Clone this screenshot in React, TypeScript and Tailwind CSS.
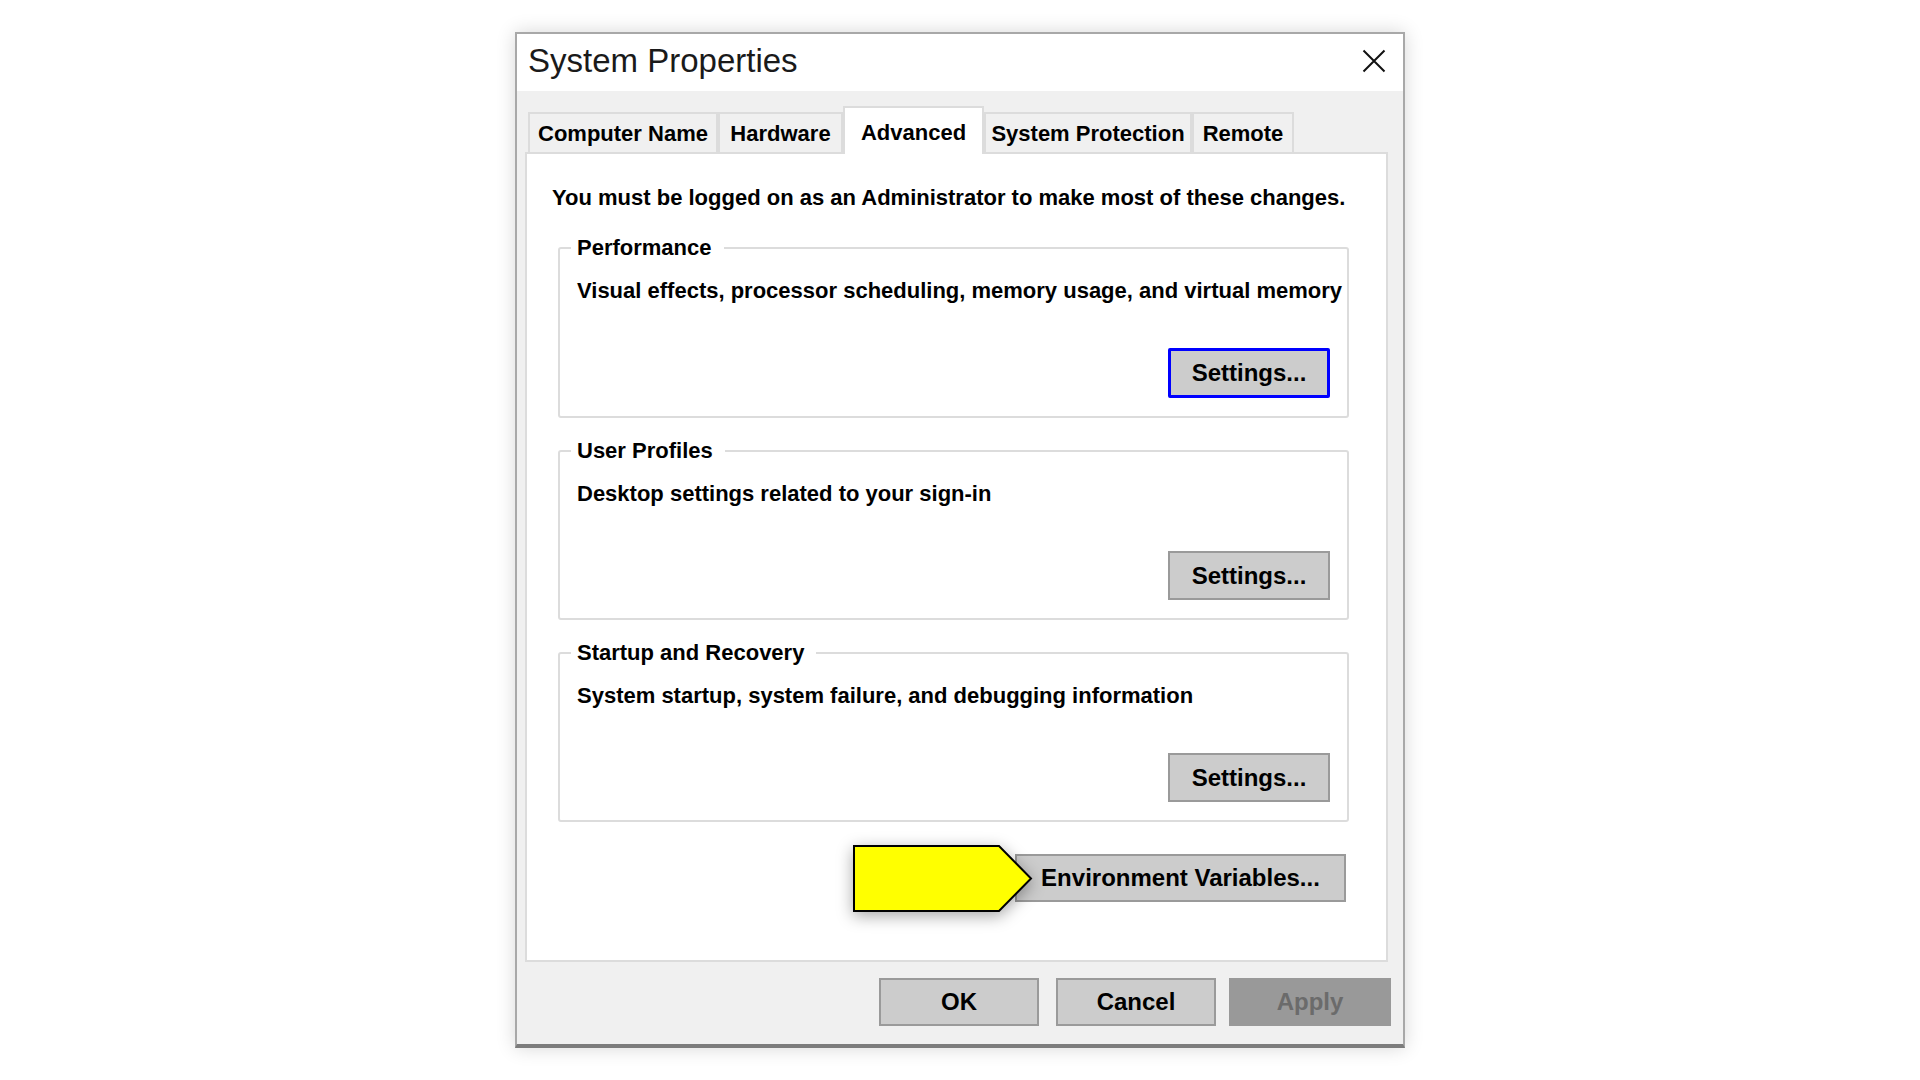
import type { ReactNode } from 'react';

const tabs = [
  { label: 'Computer Name', w: 'w-[190px]' },
  { label: 'Hardware', w: 'w-[125px]' },
  { label: 'Advanced', w: 'w-[141px]', active: true },
  { label: 'System Protection', w: 'w-[208px]' },
  { label: 'Remote', w: 'w-[102px]' },
];

function SettingsButton({ focused }: { focused?: boolean }) {
  return (
    <button
      className={
        focused
          ? 'w-[162px] h-[50px] bg-[#cccccc] border-[3px] border-[#0000ff] rounded-[2px] text-[24px] font-bold text-black'
          : 'w-[162px] h-[49px] bg-[#cccccc] border-2 border-[#9a9a9a] text-[24px] font-bold text-black'
      }
    >
      Settings...
    </button>
  );
}

function Group({ title, desc, focused, first }: { title: string; desc: string; focused?: boolean; first?: boolean }) {
  return (
    <fieldset
      className={
        (first ? 'mt-[24px] ' : 'mt-[20px] ') +
        'min-w-0 border-2 border-[#dcdcdc] rounded-[3px] pl-[17px] pr-[17px] pb-[18px]'
      }
    >
      <legend className="-ml-[6px] pl-[6px] pr-[12px] text-[22px] leading-[26px] font-bold">{title}</legend>
      <p className="mt-[17px] text-[22px] leading-[26px] font-bold whitespace-nowrap">{desc}</p>
      <div className="mt-[44px] flex justify-end">
        <SettingsButton focused={focused} />
      </div>
    </fieldset>
  );
}

function FooterButton({ children, disabled }: { children: ReactNode; disabled?: boolean }) {
  return (
    <button
      className={
        disabled
          ? 'w-[162px] h-[48px] bg-[#999999] text-[#6b6b6b] text-[24px] font-bold'
          : 'w-[160px] h-[48px] bg-[#cccccc] border-2 border-[#9a9a9a] text-[24px] font-bold text-black'
      }
    >
      {children}
    </button>
  );
}

export default function App() {
  return (
    <div className="min-h-screen bg-white pt-[32px] font-['Liberation_Sans',Arial,sans-serif] text-black">
      <div className="mx-auto w-[890px] h-[1016px] flex flex-col bg-[#f0f0f0] border-2 border-[#a8a8a8] border-b-4 border-b-[#7c7c7c] shadow-[0_0_18px_rgba(0,0,0,0.16)]">
        {/* title bar */}
        <div className="h-[57px] shrink-0 bg-white flex items-center justify-between pl-[11px] pr-[17px]">
          <span className="text-[33px] leading-none text-[#1a1a1a] pb-[4px]">System Properties</span>
          <svg width="24" height="24" viewBox="0 0 24 24" className="mb-[4px]">
            <path d="M1.5 1.5 L22.5 22.5 M22.5 1.5 L1.5 22.5" stroke="#111" strokeWidth="2" fill="none" />
          </svg>
        </div>

        <div className="pl-[8px] pr-[15px]">
          {/* tabs */}
          <div className="relative z-10 flex items-end pt-[15px] pl-[3px]">
            {tabs.map((t) =>
              t.active ? (
                <div
                  key={t.label}
                  className={t.w + ' h-[48px] -mb-[2px] bg-white border-2 border-b-0 border-[#dcdcdc] flex items-center justify-center pt-[3px] text-[22px] font-bold'}
                >
                  {t.label}
                </div>
              ) : (
                <div
                  key={t.label}
                  className={t.w + ' h-[40px] bg-[#f0f0f0] border-2 border-b-0 border-[#dcdcdc] flex items-center justify-center text-[22px] font-bold'}
                >
                  {t.label}
                </div>
              )
            )}
          </div>

          {/* panel */}
          <div className="h-[810px] bg-white border-2 border-[#dcdcdc] pl-[31px] pr-[37px] pt-[31px]">
            <p className="text-[22px] leading-[26px] font-bold -ml-[6px] whitespace-nowrap">
              You must be logged on as an Administrator to make most of these changes.
            </p>
            <Group
              first
              focused
              title="Performance"
              desc="Visual effects, processor scheduling, memory usage, and virtual memory"
            />
            <Group title="User Profiles" desc="Desktop settings related to your sign-in" />
            <Group title="Startup and Recovery" desc="System startup, system failure, and debugging information" />

            <div className="mt-[32px] flex justify-end pr-[3px]">
              <div className="relative">
                <button className="w-[331px] h-[48px] bg-[#cccccc] border-2 border-[#9a9a9a] text-[24px] font-bold text-black">
                  Environment Variables...
                </button>
                <svg
                  width="180"
                  height="67"
                  viewBox="0 0 180 67"
                  className="absolute left-[-162px] top-[-9px] drop-shadow-[0_4px_8px_rgba(0,0,0,0.35)]"
                >
                  <polygon points="1,1 146,1 178,33.5 146,66 1,66" fill="#ffff00" stroke="#000" strokeWidth="2" strokeLinejoin="miter" />
                </svg>
              </div>
            </div>
          </div>
        </div>

        {/* footer */}
        <div className="flex justify-end pt-[16px] pr-[12px]">
          <FooterButton>OK</FooterButton>
          <div className="ml-[17px]">
            <FooterButton>Cancel</FooterButton>
          </div>
          <div className="ml-[13px]">
            <FooterButton disabled>Apply</FooterButton>
          </div>
        </div>
      </div>
    </div>
  );
}
